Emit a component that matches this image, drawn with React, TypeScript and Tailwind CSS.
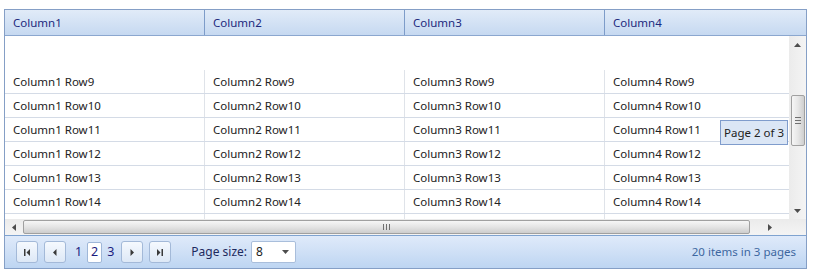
import React from "react";

const font = { fontFamily: '"Segoe UI", "Noto Sans", "Open Sans", sans-serif' };

const cols = ["Column1", "Column2", "Column3", "Column4"];
const rows = [9, 10, 11, 12, 13, 14];

function Tri({ dir, className = "" }: { dir: "up" | "down" | "left" | "right"; className?: string }) {
  const pts = {
    up: "0,4 7,4 3.5,0",
    down: "0,0 7,0 3.5,4",
    left: "4,0 4,7 0,3.5",
    right: "0,0 0,7 4,3.5",
  }[dir];
  const vertical = dir === "up" || dir === "down";
  return (
    <svg width={vertical ? 7 : 4} height={vertical ? 4 : 7} className={className}>
      <polygon points={pts} fill="#4d4d4d" />
    </svg>
  );
}

function PagerButton({ kind }: { kind: "first" | "prev" | "next" | "last" }) {
  return (
    <button className="flex h-[22px] w-[22px] items-center justify-center rounded-[3px] border border-[#a3b9d8] bg-gradient-to-b from-[#f5f9fe] to-[#dde8f6]">
      <svg width="10" height="9">
        {kind === "first" && (
          <>
            <rect x="2" y="1" width="1.5" height="7" fill="#3a3a3a" />
            <polygon points="8,1 8,8 4.5,4.5" fill="#3a3a3a" />
          </>
        )}
        {kind === "prev" && <polygon points="6.5,1 6.5,8 3,4.5" fill="#3a3a3a" />}
        {kind === "next" && <polygon points="3.5,1 3.5,8 7,4.5" fill="#3a3a3a" />}
        {kind === "last" && (
          <>
            <polygon points="2,1 2,8 5.5,4.5" fill="#3a3a3a" />
            <rect x="6.5" y="1" width="1.5" height="7" fill="#3a3a3a" />
          </>
        )}
      </svg>
    </button>
  );
}

export default function App() {
  return (
    <div className="relative h-[280px] w-[821px] bg-white pl-[4px] pt-[9px] text-[11.5px]" style={font}>
      <div className="w-[803px] border border-[#859fc6]">
        {/* header */}
        <div className="flex h-[26px] border-b border-[#8ba7cf] bg-gradient-to-b from-[#e1ebf8] to-[#c6d9f1] text-[#1d2a7d]">
          {cols.map((c, i) => (
            <div
              key={c}
              className={`flex items-center pl-[8px] ${i < 3 ? "w-[200px] border-r border-[#7d9cc9]" : "flex-1"}`}
            >
              {c}
            </div>
          ))}
        </div>

        {/* body */}
        <div className="flex h-[183px]">
          <div className="w-[784px] overflow-hidden text-[#222]">
            <div className="h-[34px]" />
            {rows.map((r) => (
              <div key={r} className="flex h-[24px] border-b border-[#d4dbe6]">
                {cols.map((c, i) => (
                  <div
                    key={c}
                    className={`flex items-center pl-[8px] ${i < 3 ? "w-[200px] border-r border-[#dfe3e9]" : "flex-1"}`}
                  >
                    {c} Row{r}
                  </div>
                ))}
              </div>
            ))}
            <div className="flex h-[8px]">
              <div className="w-[200px] border-r border-[#dfe3e9]" />
              <div className="w-[200px] border-r border-[#dfe3e9]" />
              <div className="w-[200px] border-r border-[#dfe3e9]" />
            </div>
          </div>
          {/* vertical scrollbar */}
          <div className="flex w-[17px] flex-col items-center bg-gradient-to-r from-[#ebebeb] to-[#f4f4f4]">
            <div className="flex h-[17px] items-center justify-center">
              <Tri dir="up" />
            </div>
            <div className="h-[42px]" />
            <div className="flex h-[51px] w-[14px] items-center justify-center rounded-[2px] border border-[#a0a0a0] bg-gradient-to-r from-[#f6f6f6] via-[#e6e6e6] to-[#cfcfcf]">
              <div className="flex flex-col gap-[2px]">
                <div className="h-px w-[6px] bg-[#707070]" />
                <div className="h-px w-[6px] bg-[#707070]" />
                <div className="h-px w-[6px] bg-[#707070]" />
              </div>
            </div>
            <div className="flex-1" />
            <div className="flex h-[17px] items-center justify-center">
              <Tri dir="down" />
            </div>
          </div>
        </div>

        {/* horizontal scrollbar */}
        <div className="flex h-[16px] items-center bg-gradient-to-b from-[#ebebeb] to-[#f4f4f4]">
          <div className="flex w-[18px] justify-center">
            <Tri dir="left" />
          </div>
          <div className="flex h-[14px] w-[727px] items-center justify-center rounded-[2px] border border-[#a0a0a0] bg-gradient-to-b from-[#f6f6f6] via-[#e4e4e4] to-[#cdcdcd]">
            <div className="flex gap-[2px]">
              <div className="h-[6px] w-px bg-[#707070]" />
              <div className="h-[6px] w-px bg-[#707070]" />
              <div className="h-[6px] w-px bg-[#707070]" />
            </div>
          </div>
          <div className="flex w-[39px] justify-center">
            <Tri dir="right" />
          </div>
          <div className="flex-1" />
        </div>

        {/* pager */}
        <div className="flex h-[33px] items-center border-t border-[#7fa3d0] bg-gradient-to-b from-[#dfeafa] via-[#cfe0f6] to-[#bdd5f2] pl-[11px] pr-[10px]">
          <div className="flex items-center gap-[6px]">
            <PagerButton kind="first" />
            <PagerButton kind="prev" />
          </div>
          <div className="ml-[8px] flex items-center gap-[4px] text-[12.5px] text-[#1c1c7e]">
            <span className="px-[1px]">1</span>
            <span className="flex h-[21px] w-[15px] items-center justify-center rounded-[2px] border border-[#9fb7d8] bg-white">2</span>
            <span className="px-[1px]">3</span>
          </div>
          <div className="ml-[6px] flex items-center gap-[6px]">
            <PagerButton kind="next" />
            <PagerButton kind="last" />
          </div>
          <span className="ml-[20px] text-[12px] text-[#1d2a5e]">Page size:</span>
          <div className="ml-[4px] flex h-[22px] w-[45px] items-center justify-between rounded-[2px] border border-[#a9bedb] bg-white pl-[4px] pr-[6px] text-[12px] text-[#222]">
            <span>8</span>
            <Tri dir="down" />
          </div>
          <div className="flex-1" />
          <span className="text-[#3d67a0]">20 items in 3 pages</span>
        </div>
      </div>

      {/* tooltip */}
      <div className="absolute left-[720px] top-[120px] flex h-[25px] items-center border border-[#7f9ccc] bg-[#dbe6f5] px-[3px] text-[11.5px] text-[#222]">
        Page 2 of 3
      </div>
    </div>
  );
}
